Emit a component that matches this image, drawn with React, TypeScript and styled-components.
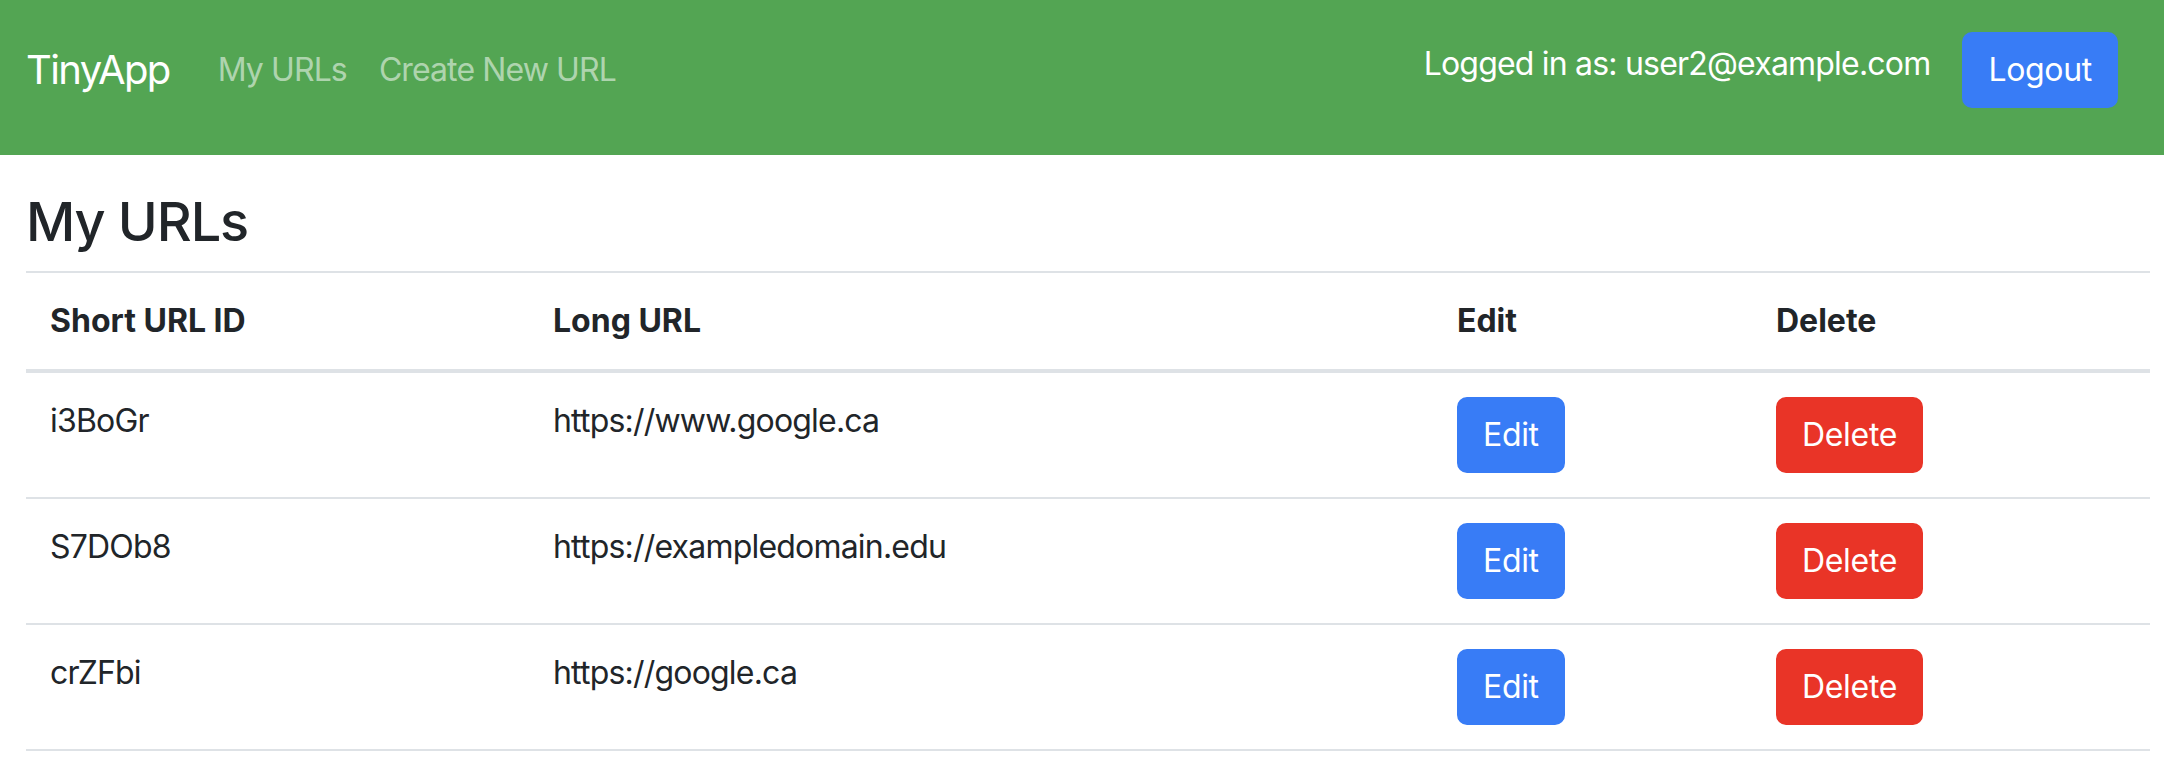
import React from "react";
import styled, { createGlobalStyle } from "styled-components";

const GlobalStyle = createGlobalStyle`
  html, body {
    margin: 0;
    padding: 0;
    background: #ffffff;
  }
  body {
    font-family: Inter, "Noto Sans", "Liberation Sans", sans-serif;
    color: #212529;
    font-size: 32px;
    line-height: 1.5;
  }
  * { box-sizing: border-box; }
`;

const Navbar = styled.nav`
  display: flex;
  align-items: center;
  height: 155px;
  padding: 32px 46px 47px 26px;
  background: #53a553;
`;

const Brand = styled.a`
  font-size: 40px;
  line-height: 60px;
  letter-spacing: -0.04em;
  color: #ffffff;
  text-decoration: none;
  margin-right: 32px;
`;

const NavList = styled.ul`
  display: flex;
  list-style: none;
  margin: 0;
  padding: 0;
`;

const NavLink = styled.a`
  display: block;
  padding: 0 16px;
  font-size: 32px;
  line-height: 48px;
  letter-spacing: -0.028em;
  color: rgba(255, 255, 255, 0.55);
  text-decoration: none;
`;

const UserArea = styled.div`
  display: flex;
  align-items: center;
  margin-left: auto;
  gap: 32px;
`;

const UserText = styled.span`
  color: #ffffff;
  font-size: 32px;
  line-height: 48px;
  letter-spacing: -0.025em;
  margin-bottom: 12px;
`;

const Button = styled.button<{ $variant: "primary" | "danger" }>`
  font-family: inherit;
  font-size: 32px;
  line-height: 48px;
  letter-spacing: -0.01em;
  padding: 12px 24px;
  border: 2px solid ${(p) => (p.$variant === "primary" ? "#387cf6" : "#e93427")};
  background: ${(p) => (p.$variant === "primary" ? "#387cf6" : "#e93427")};
  color: #ffffff;
  border-radius: 10px;
  cursor: pointer;
`;

const Main = styled.main`
  padding: 35px 14px 0 26px;
`;

const Title = styled.h3`
  margin: 0 0 16px;
  font-size: 54px;
  line-height: 1.2;
  font-weight: 500;
  letter-spacing: -0.02em;
`;

const Table = styled.table`
  width: 100%;
  border-collapse: collapse;
  table-layout: fixed;
  border-top: 2px solid #dee2e6;
`;

const HeadCell = styled.th<{ $w: number }>`
  width: ${(p) => p.$w}px;
  text-align: left;
  font-weight: 700;
  padding: 24px;
  line-height: 48px;
  border-bottom: 4px solid #dee2e6;
`;

const Cell = styled.td`
  vertical-align: top;
  padding: 24px;
  line-height: 48px;
  letter-spacing: -0.025em;
  border-bottom: 2px solid #dee2e6;
`;

const urls = [
  { id: "i3BoGr", long: "https://www.google.ca" },
  { id: "S7DOb8", long: "https://exampledomain.edu" },
  { id: "crZFbi", long: "https://google.ca" },
];

export default function App() {
  return (
    <>
      <GlobalStyle />
      <Navbar>
        <Brand href="#">TinyApp</Brand>
        <NavList>
          <li>
            <NavLink href="#">My URLs</NavLink>
          </li>
          <li>
            <NavLink href="#">Create New URL</NavLink>
          </li>
        </NavList>
        <UserArea>
          <UserText>Logged in as: user2@example.com</UserText>
          <Button $variant="primary">Logout</Button>
        </UserArea>
      </Navbar>
      <Main>
        <Title>My URLs</Title>
        <Table>
          <thead>
            <tr>
              <HeadCell $w={503}>Short URL ID</HeadCell>
              <HeadCell $w={904}>Long URL</HeadCell>
              <HeadCell $w={319}>Edit</HeadCell>
              <HeadCell $w={398}>Delete</HeadCell>
            </tr>
          </thead>
          <tbody>
            {urls.map((u) => (
              <tr key={u.id}>
                <Cell>{u.id}</Cell>
                <Cell>{u.long}</Cell>
                <Cell>
                  <Button $variant="primary">Edit</Button>
                </Cell>
                <Cell>
                  <Button $variant="danger">Delete</Button>
                </Cell>
              </tr>
            ))}
          </tbody>
        </Table>
      </Main>
    </>
  );
}
